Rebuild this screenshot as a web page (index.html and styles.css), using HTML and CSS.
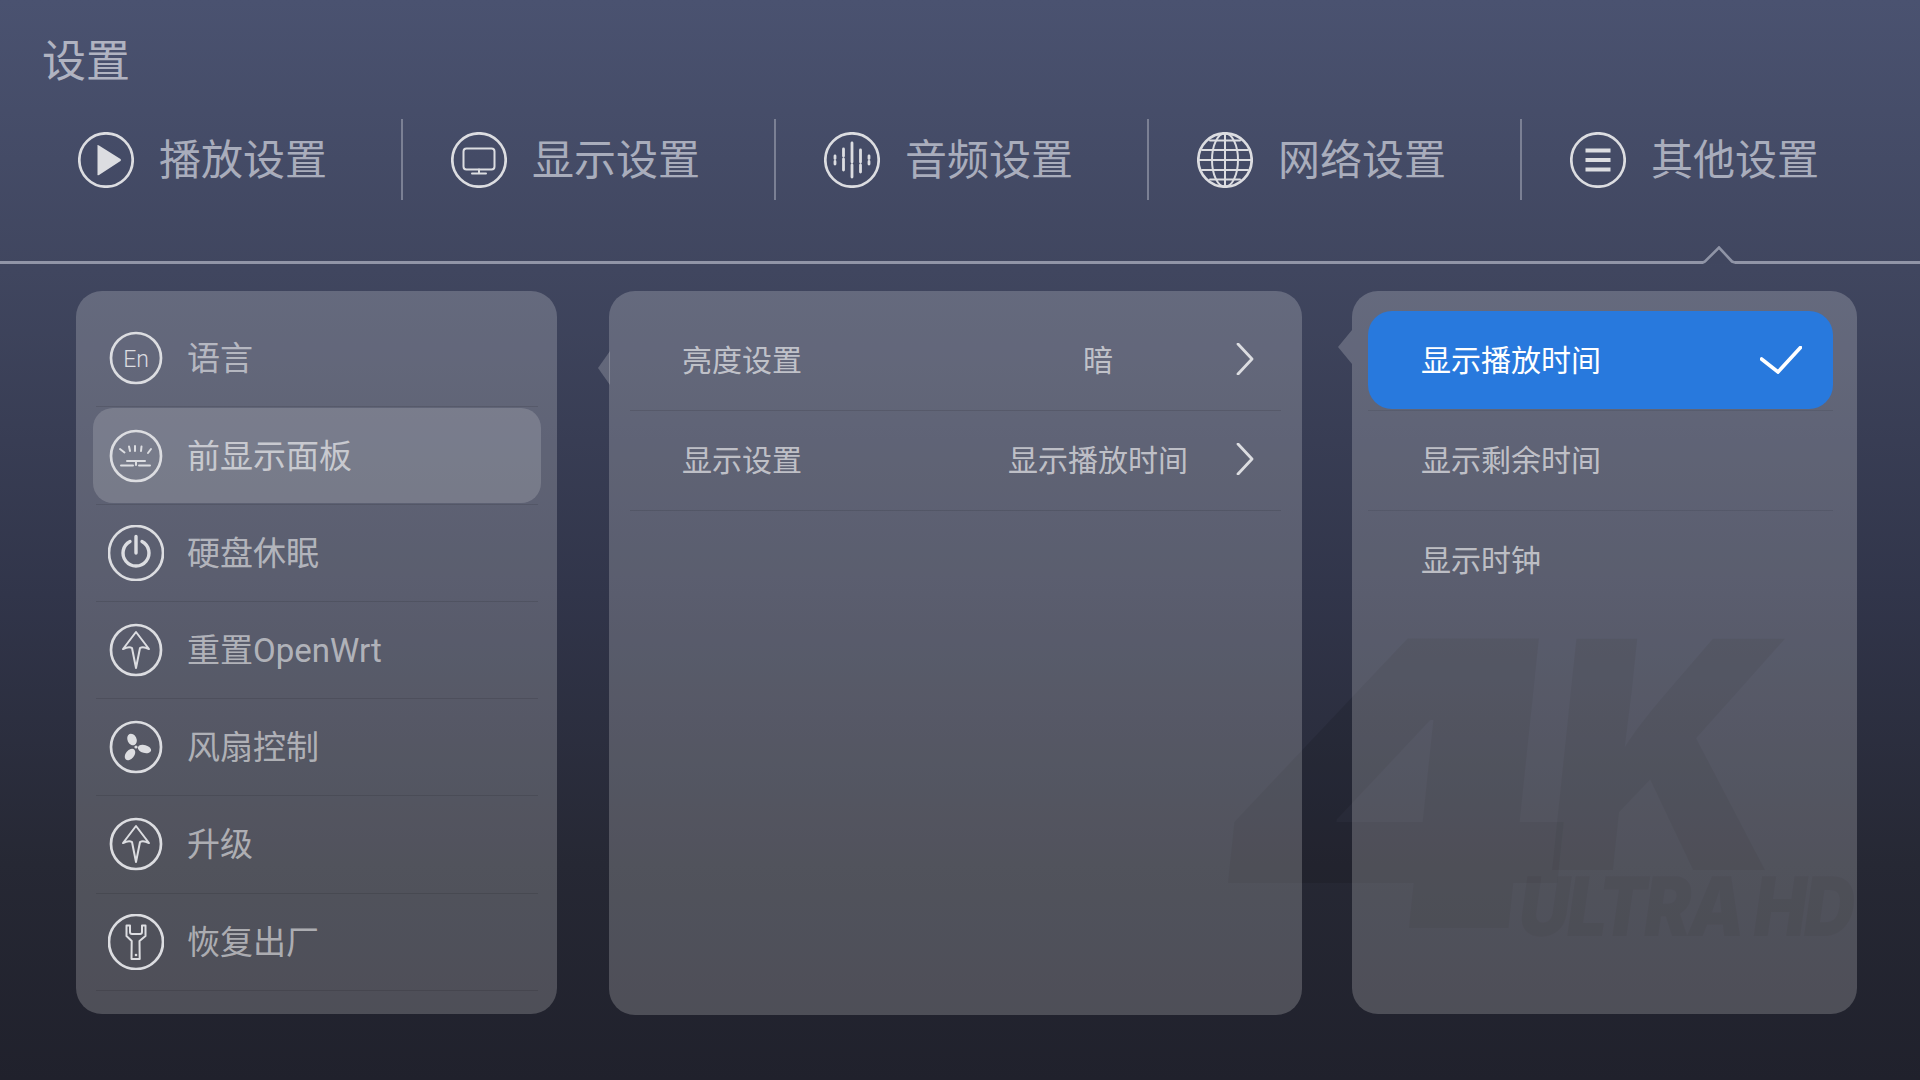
FILE: index.html
```html
<!DOCTYPE html>
<html lang="zh-CN">
<head>
<meta charset="utf-8">
<title>设置</title>
<link rel="stylesheet" href="styles.css">
</head>
<body>
<div class="watermark" aria-hidden="true">
  <span class="wm-four">4</span>
  <span class="wm-k">K</span>
  <span class="wm-ultra">ULTRA HD</span>
</div>
<div class="page">
  <h1 class="title">设置</h1>
  <nav class="tabs">
    <div class="tab">
      <svg class="tab-icon" viewBox="-28 -28 56 56"><circle class="ring" r="26.7"/><path class="solid" d="M-8.5 -14 Q-9 -15.5 -7 -14.5 L14.5 -1 Q15.5 0 14.5 1 L-7 15 Q-9 16 -8.5 14 Z"/></svg>
      <span class="tab-label">播放设置</span>
    </div>
    <div class="tab">
      <svg class="tab-icon" viewBox="-28 -28 56 56"><circle class="ring" r="26.7"/><rect class="line" x="-15.5" y="-11.5" width="31" height="21" rx="3"/><path class="line" d="M0 9.5V13M-7 13.5H7"/></svg>
      <span class="tab-label">显示设置</span>
    </div>
    <div class="tab">
      <svg class="tab-icon" viewBox="-28 -28 56 56"><circle class="ring" r="26.7"/><path class="line bold" d="M-17 -4V-1.5M-17 1.5V4M-8.5 -11V-4M-8.5 -1V10M0 -17V2M0 5V17M8.5 -10V2M8.5 5V12M17 -4V-1.5M17 1.5V4"/></svg>
      <span class="tab-label">音频设置</span>
    </div>
    <div class="tab">
      <svg class="tab-icon" viewBox="-28 -28 56 56"><circle class="ring" r="26.7"/><ellipse class="line" rx="13" ry="26.7"/><path class="line" d="M0 -26.7V26.7M-26.7 0H26.7M-23 -10H23M-23 10H23M-15 -19.5H15M-15 19.5H15"/></svg>
      <span class="tab-label">网络设置</span>
    </div>
    <div class="tab tab-last">
      <svg class="tab-icon" viewBox="-28 -28 56 56"><circle class="ring" r="26.7"/><path class="line thick" d="M-12.5 -9.5H12.5M-12.5 0H12.5M-12.5 9.5H12.5"/></svg>
      <span class="tab-label">其他设置</span>
    </div>
  </nav>
  <div class="rule">
    <svg class="rule-notch" viewBox="0 0 32 18"><path class="notch-fill" d="M0 18 L16 1 L32 18 Z"/><path class="notch-line" d="M0 16.5 L2 15.5 L16 1.5 L29 15.5 L32 16.5"/></svg>
  </div>
  <main class="panels">
    <section class="panel panel-left">
      <ul class="list">
        <li class="row"><div class="row-in">
          <svg class="row-icon" viewBox="-28 -28 56 56"><circle class="ring" r="25"/><text class="en" x="0" y="8.5" text-anchor="middle">En</text></svg>
          <span class="row-label">语言</span>
        </div></li>
        <li class="row"><div class="row-in active">
          <svg class="row-icon" viewBox="-28 -28 56 56"><circle class="ring" r="25"/><path class="line" d="M-16 -7L-11.5 -3.5M-7 -9.5L-6 -5M-1 -10V-5M5.5 -9.5L5 -5M15 -7L12 -3M-9 5H9M0 5V9M-15 9.5H-3M3 9.5H14"/></svg>
          <span class="row-label">前显示面板</span>
        </div></li>
        <li class="row"><div class="row-in">
          <svg class="row-icon" viewBox="-28 -28 56 56"><circle class="ring" r="27"/><path class="line heavy" d="M-6 -11.5A13 13 0 1 0 6 -11.5M0 -16.5V0"/></svg>
          <span class="row-label">硬盘休眠</span>
        </div></li>
        <li class="row"><div class="row-in">
          <svg class="row-icon" viewBox="-28 -28 56 56"><circle class="ring" r="25"/><path class="line" d="M0 -18L13 -1Q7 -4 4 -2Q2 8 0 18Q-2 8 -4 -2Q-7 -4 -13 -1Z"/></svg>
          <span class="row-label">重置<span class="latin">OpenWrt</span></span>
        </div></li>
        <li class="row"><div class="row-in">
          <svg class="row-icon" viewBox="-28 -28 56 56"><circle class="ring" r="25"/><g class="solid"><ellipse cx="-4" cy="-7.5" rx="4.5" ry="6" transform="rotate(-25 -4 -7.5)"/><ellipse cx="8.5" cy="2" rx="6.8" ry="4" transform="rotate(15 8.5 2)"/><ellipse cx="-6" cy="7.5" rx="6.5" ry="4.2" transform="rotate(-50 -6 7.5)"/><circle r="1.6"/></g></svg>
          <span class="row-label">风扇控制</span>
        </div></li>
        <li class="row"><div class="row-in">
          <svg class="row-icon" viewBox="-28 -28 56 56"><circle class="ring" r="25"/><path class="line" d="M0 -18L13 -1Q7 -4 4 -2Q2 8 0 18Q-2 8 -4 -2Q-7 -4 -13 -1Z"/></svg>
          <span class="row-label">升级</span>
        </div></li>
        <li class="row"><div class="row-in">
          <svg class="row-icon" viewBox="-28 -28 56 56"><circle class="ring" r="27"/><path class="line" d="M-9.5 -16.5L-6 -16.5L-6 -10Q-6 -8 -4 -8L4 -8Q6 -8 6 -10L6 -16.5L9.5 -16.5L9.5 -6L3.5 -1L3.7 17L-4.5 17L-4.3 -1L-9.5 -6Z"/><circle class="solid" cx="0" cy="13" r="1.3"/></svg>
          <span class="row-label">恢复出厂</span>
        </div></li>
      </ul>
    </section>
    <section class="panel panel-mid">
      <svg class="panel-tip tip-mid" viewBox="0 0 12 34"><path d="M12 0 L0 17 L12 34 Z"/></svg>
      <ul class="list">
        <li class="opt"><span class="opt-label">亮度设置</span><span class="opt-value">暗</span>
          <svg class="chev" viewBox="0 0 18 32"><path d="M2 1L16 16L2 31"/></svg></li>
        <li class="opt"><span class="opt-label">显示设置</span><span class="opt-value">显示播放时间</span>
          <svg class="chev" viewBox="0 0 18 32"><path d="M2 1L16 16L2 31"/></svg></li>
      </ul>
    </section>
    <section class="panel panel-right">
      <svg class="panel-tip tip-right" viewBox="0 0 14 34"><path d="M14 0 L0 17 L14 34 Z"/></svg>
      <ul class="list">
        <li class="choice"><div class="choice-in selected"><span>显示播放时间</span>
          <svg class="check" viewBox="0 0 42 28"><path d="M1.5 13L18 26L40.5 1.5"/></svg></div></li>
        <li class="choice"><div class="choice-in"><span>显示剩余时间</span></div></li>
        <li class="choice plain"><div class="choice-in"><span>显示时钟</span></div></li>
      </ul>
    </section>
  </main>
</div>
</body>
</html>
```
FILE: styles.css
```css
* { box-sizing: border-box; }
html, body { margin: 0; padding: 0; }
body {
  width: 1920px;
  height: 1080px;
  overflow: hidden;
  position: relative;
  background: linear-gradient(180deg, #4a5270 0%, #40465f 25%, #31354a 55%, #262834 80%, #20212c 100%);
  font-family: Roboto, "Noto Sans CJK SC", sans-serif;
}
ul { list-style: none; margin: 0; padding: 0; }

.page { position: relative; z-index: 1; height: 1080px; display: flex; flex-direction: column; }
.title {
  margin: 0;
  height: 119px;
  padding: 36px 0 0 42px;
  font-size: 44px;
  line-height: 52px;
  font-weight: 400;
  color: #b0b3c1;
}

.tabs { display: flex; height: 81px; padding-left: 30px; }
.tab {
  width: 373px;
  display: flex;
  align-items: center;
  gap: 25px;
  padding-left: 48px;
  border-right: 2px solid #7b8094;
}
.tab-last { border-right: none; }
.tab-icon { width: 56px; height: 56px; flex: none; }
.tab-label { font-size: 42px; line-height: 56px; color: #a9adbc; padding-top: 3px; }

.rule { position: relative; height: 3px; margin-top: 61px; background: #9195a7; }
.rule-notch { position: absolute; left: 1703px; top: -15px; width: 32px; height: 18px; }
.notch-fill { fill: #40465f; }
.notch-line { fill: none; stroke: #8f94a6; stroke-width: 2.6; }

.ring { fill: none; stroke: #dcdde1; stroke-width: 2.7; }
.line { fill: none; stroke: #dcdde1; stroke-width: 2; stroke-linecap: round; stroke-linejoin: round; }
.bold { stroke-width: 2.8; }
.heavy { stroke-width: 3.4; }
.thick { stroke-width: 4; stroke-linecap: butt; }
.solid { fill: #dcdde1; }
.en { font-family: Roboto, sans-serif; font-size: 23px; font-weight: 300; fill: #dcdde1; }

.panels { display: flex; align-items: flex-start; margin: 27px 0 0 76px; }
.panel {
  position: relative;
  background: rgba(255, 255, 255, 0.2);
  border-radius: 26px;
  padding-top: 19px;
  height: 723px;
}
.panel-left { width: 481px; }
.panel-mid { width: 693px; height: 724px; margin-left: 52px; padding-top: 20px; }
.panel-right { width: 505px; margin-left: 50px; padding-top: 20px; }

.panel-tip { position: absolute; fill: rgba(255, 255, 255, 0.2); }
.tip-mid { left: -11px; top: 60px; width: 12px; height: 34px; }
.tip-right { left: -14px; top: 39px; width: 14px; height: 34px; }

.panel-left .list { padding: 0 16px 0 17px; }
.row { margin: 0 3px; border-bottom: 1px solid rgba(0, 0, 0, 0.1); height: 97px; }
.row:nth-child(6) { height: 98px; }
.row-in {
  height: 96px;
  margin: 0 -3px;
  padding-left: 15px;
  display: flex;
  align-items: center;
  gap: 23px;
  border-radius: 20px;
}
.row-in.active { background: rgba(255, 255, 255, 0.16); height: 95px; margin-top: 1px; }
.row-icon { width: 56px; height: 56px; flex: none; }
.row-label { font-size: 33px; line-height: 44px; color: rgba(255, 255, 255, 0.55); padding-top: 2px; }
.row-in.active .row-label { color: rgba(255, 255, 255, 0.6); }
.latin { font-family: Roboto, sans-serif; }

.panel-mid .list { padding: 0 21px; }
.opt {
  height: 100px;
  padding: 0 0 5px 52px;
  display: flex;
  align-items: center;
  border-bottom: 1px solid rgba(0, 0, 0, 0.1);
  font-size: 30px;
  color: rgba(255, 255, 255, 0.62);
}
.opt-label { width: 316px; }
.opt-value { width: 200px; text-align: center; }
.chev { width: 18px; height: 32px; margin-left: 38px; margin-top: 2px; }
.chev path { fill: none; stroke: #dcdde1; stroke-width: 2.8; stroke-linecap: round; stroke-linejoin: round; }

.panel-right .list { padding: 0 24px 0 16px; }
.choice { height: 100px; border-bottom: 1px solid rgba(0, 0, 0, 0.08); }
.choice.plain { border-bottom: none; }
.choice-in {
  height: 98px;
  padding: 0 31px 5px 53px;
  display: flex;
  align-items: center;
  justify-content: space-between;
  font-size: 30px;
  color: rgba(255, 255, 255, 0.62);
  border-radius: 24px;
}
.choice-in.selected { background: #2879dd; color: #fff; }
.check { width: 42px; height: 28px; margin-top: 5px; }
.check path { fill: none; stroke: #fff; stroke-width: 3.6; stroke-linecap: round; stroke-linejoin: miter; }

.watermark {
  position: absolute;
  left: 0;
  top: 0;
  width: 1920px;
  height: 1080px;
  overflow: hidden;
  color: rgba(0, 0, 0, 0.1);
  font-family: Inter, "Liberation Sans", sans-serif;
  font-weight: 900;
}
.wm-four, .wm-k, .wm-ultra { position: absolute; white-space: nowrap; line-height: 1; transform-origin: 0 100%; }
.wm-four { left: 1196px; top: 584px; font-size: 398px; transform: skewX(-6deg) scaleX(1.32); }
.wm-k { left: 1533px; top: 596px; font-size: 318px; transform: skewX(-6deg) scaleX(.97); }
.wm-ultra { left: 1514px; top: 866px; font-size: 82px; letter-spacing: -3px; transform: skewX(-8deg) scaleX(.86); }
```
